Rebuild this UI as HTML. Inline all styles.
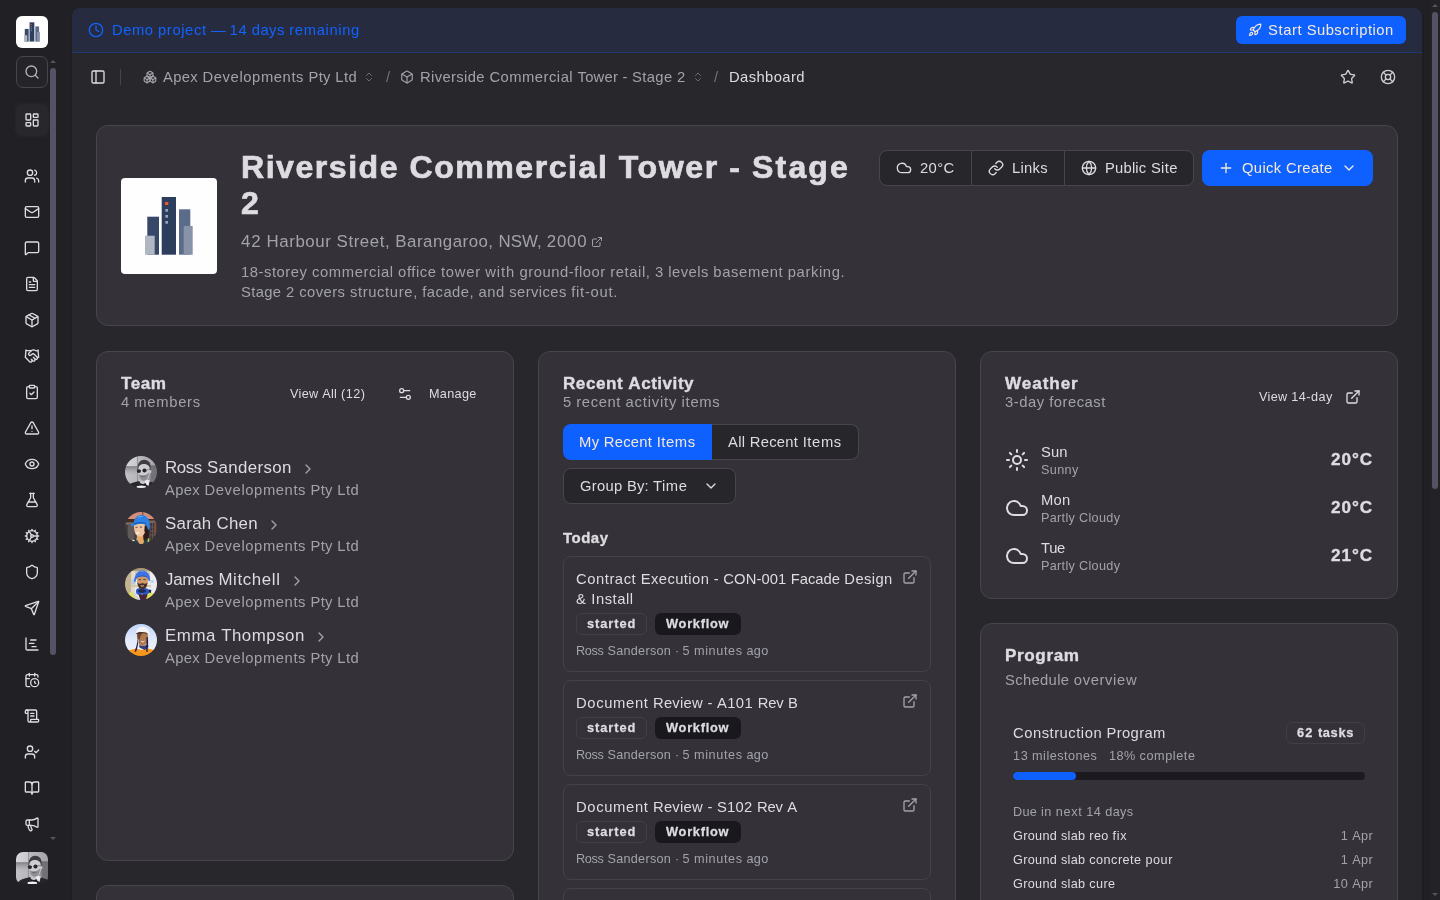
<!DOCTYPE html>
<html lang="en"><head><meta charset="utf-8"><title>Dashboard - Riverside Commercial Tower - Stage 2</title>
<style>
*{box-sizing:border-box;margin:0;padding:0}
html,body{width:1440px;height:900px;overflow:hidden}
body{background:#212025;color:#dedce1;font-size:14px;line-height:20px;position:relative}
body{font-family:"Liberation Sans",sans-serif}
.b,.badge{-webkit-text-stroke:.022em currentColor}
.w{display:inline-block;white-space:pre}
.ic{display:block;flex:none}
.a{position:absolute}
.t{position:absolute;white-space:nowrap}
.mu{color:#a3a2ab}
.b{font-weight:700}
.f12{font-size:12px;line-height:16px}
.f14{font-size:14px;line-height:20px}
.f16{font-size:16px;line-height:24px}
/* sidebar */
#sb .it{position:absolute;left:16px;width:32px;height:32px;display:flex;align-items:center;justify-content:center;color:#dedce1}
#logo{left:16px;top:16px;width:32px;height:32px;background:#fff;border-radius:6px}
#srch{left:16px;top:56px;width:32px;height:32px;border:1px solid #48464d;border-radius:7px;background:#252429;display:flex;align-items:center;justify-content:center;color:#b5b4bb}
.thumb{background:#575263;border-radius:3px;width:6px}
.arr{width:0;height:0;border-left:3px solid transparent;border-right:3px solid transparent}
/* main */
#main{left:72px;top:8px;width:1350px;height:892px;background:#28272c;border-radius:8px 8px 0 0;overflow:hidden}
#mainsh{left:71px;top:8px;width:1353px;height:892px;background:#1e1d22;border-radius:8px 9px 0 0}
#ban{left:0;top:0;width:1350px;height:45px;background:#272b40;border-bottom:1px solid #1f3a72}
.card{position:absolute;background:#343238;border:1px solid #48464d;border-radius:12px}
.btn{position:absolute;display:flex;align-items:center;background:#27262b;border:1px solid #48464d}
.pri{background:#0f61ff;color:#f3e9d6;border:0}
.badge{position:absolute;height:22px;border-radius:6px;font-size:12px;line-height:16px;font-weight:700}
.bo{border:1px solid #413f46}
.bd{background:#19181c;color:#dedce1}
.item{position:absolute;left:24px;width:368px;border:1px solid #444249;border-radius:8px}
</style></head>
<body style="will-change:transform">
<svg width="0" height="0" style="position:absolute"><defs>
<filter id="bl" x="-10%" y="-10%" width="120%" height="120%"><feGaussianBlur stdDeviation=".55"/></filter>
<filter id="bl2" x="-10%" y="-10%" width="120%" height="120%"><feGaussianBlur stdDeviation=".4"/></filter>
<clipPath id="cc"><circle cx="16" cy="16" r="16"/></clipPath>
<linearGradient id="r1" x1="0" y1="0" x2="1" y2="0"><stop offset="0" stop-color="#c4c4c9"/><stop offset=".45" stop-color="#b4b4b9"/><stop offset="1" stop-color="#77777c"/></linearGradient>
<linearGradient id="r2" x1="0" y1="0" x2="0" y2="1"><stop offset="0" stop-color="#77777c" stop-opacity=".9"/><stop offset="1" stop-color="#a8a8ad" stop-opacity="0"/></linearGradient>
<linearGradient id="r3" x1="0" y1="0" x2="1" y2="0"><stop offset="0" stop-color="#dadadf"/><stop offset="1" stop-color="#c8c8cd"/></linearGradient>
<linearGradient id="s4" x1="0" y1="0" x2="0" y2="1"><stop offset="0" stop-color="#b9d3fb"/><stop offset=".55" stop-color="#e6ecfa"/><stop offset="1" stop-color="#f2f3f8"/></linearGradient>
<g id="ross" filter="url(#bl)">
 <rect x="-2" y="-2" width="36" height="36" fill="url(#r1)"/>
 <rect x="-2" y="-2" width="14.300" height="12.300" fill="url(#r3)"/>
 <rect x="12.200" y="-2" width="21" height="12.300" fill="#bcbcc1" opacity=".6"/>
 <rect x="-2" y="10.200" width="36" height="9" fill="url(#r2)"/>
 <rect x="12" y="-2" width=".7" height="30" fill="#85858a"/>
 <rect x="25.500" y="9" width="9" height="22" fill="#66666b" opacity=".65"/>
 <path d="M1 34c.500-4.500 3.500-6.800 8.500-7.800l5.500-1.400h7l4.500 1.200c3.500.8 6 1.800 7.500 3.500v4.500z" fill="#28272c"/>
 <path d="M19.800 23.300l5 1.200-1.300 5.500-3.700-2.500z" fill="#e8e8ec"/>
 <path d="M14 24.300l5.800-.5.500 4-4.300 1.700z" fill="#c4c4c9"/>
 <path d="M12.600 14c-.6-5.500 2-10.200 6.600-10.200 4.500 0 7 3.500 6.400 9.200l-.6 2.500h-12z" fill="#3d3d42"/>
 <path d="M13.300 12.300c.2-2.600 2.300-4.300 5.500-4.300s5.700 1.700 6 4.500c.3 3 .1 6.300-.9 8.800-.9 2.300-2.600 3.600-4.800 3.600s-4.200-1.500-5.100-4c-.7-2.200-.9-5.600-.7-8.600z" fill="#cdcdd2"/>
 <path d="M13.600 18c1.300 1 2.900 1.400 5 1.200s3.900-1 5.400-2.700c-.1 4.300-1.800 8.300-5 8.300s-5-3.300-5.400-6.800z" fill="#8e8e93"/>
 <path d="M16 20.200c1.400.6 3 .5 4.300-.2" stroke="#5d5d62" stroke-width=".8" fill="none"/>
 <ellipse cx="25.500" cy="15.600" rx=".9" ry="1.600" fill="#c4c4c9"/>
 <path d="M15 27.200l3.200 1 2.400-1.200.4 2.200-2.900.3-3 .5z" fill="#17171b"/>
 <ellipse cx="16.300" cy="30.900" rx="4.800" ry="1.500" fill="#eeeef2"/>
</g>
<g id="rossg" filter="url(#bl2)">
 <ellipse cx="13.900" cy="15.100" rx="2.100" ry="1.950" fill="#27272c"/><ellipse cx="19.500" cy="14.500" rx="2.100" ry="1.950" fill="#27272c"/>
 <path d="M21.300 13.900l3.700-.5" stroke="#55555a" stroke-width=".6"/>
</g>
<g id="sarah" filter="url(#bl)">
 <rect x="-2" y="-2" width="36" height="36" fill="#4a4342"/>
 <rect x="-2" y="-2" width="36" height="9" fill="#d48f7c"/>
 <rect x="17" y="-2" width="1.300" height="7" fill="#8c5548"/>
 <rect x="-2" y="7" width="36" height="3.200" fill="#4a2a1f"/>
 <rect x="0" y="10.500" width="8" height="2" fill="#77726f"/>
 <rect x="2.500" y="13" width="6.500" height="15" fill="#5f5a58"/>
 <rect x="0" y="13" width="2.500" height="14" fill="#3c3837"/>
 <rect x="22" y="8.500" width="12" height="2.500" fill="#6e6866"/>
 <rect x="23" y="11" width="6" height="17" fill="#3b3536"/>
 <path d="M25 11v17M27.500 11v17M23 15h7M23 19h7M23 23h7" stroke="#6b6361" stroke-width=".7"/>
 <rect x="29.200" y="9" width="1.600" height="18" fill="#8a4a40"/>
 <path d="M19 13c3 0 5.500 2 5.500 6s-1 8-2.500 10h-6z" fill="#2e1d1e"/>
 <path d="M9.500 26c-1 1.500-1.500 3.500-1.500 6h6z" fill="#3a2526"/>
 <path d="M12.500 22h5.500l.5 6 2 4h-10z" fill="#e5a866"/>
 <path d="M7 34l1-4.500 4-1.500 2.500 4zM26 34l-1-5-5-1.500-2 4.500z" fill="#213f4f"/>
 <rect x="22.700" y="26.500" width="1.500" height="4" fill="#b7dc45"/>
 <rect x="7.300" y="27.800" width="2.400" height="1.300" fill="#dfe3ea"/>
 <path d="M9 13.500c0-2 2.500-3 6-3s5.800 1.500 5.800 4.500c0 2.800-.5 5.500-1.800 7.300s-2.800 2.500-4.500 2.500-3.300-1.200-4.300-3.200c-.9-2-1.200-5.500-1.200-8.100z" fill="#eec6a5"/>
 <path d="M10.800 20.300c1.300.5 2.700.4 3.900-.2-.4 1.300-1.200 1.900-2.100 1.900s-1.500-.7-1.800-1.700z" fill="#fbfbfb"/>
 <path d="M10.500 15.300h2M14.800 15.100h2.200" stroke="#3a2a28" stroke-width=".8"/>
 <path d="M19.800 13l1.300 1.500c.8 2 .5 4-.3 6l-1.500-1z" fill="#2a1a1b"/>
 <path d="M5.800 12.500c.4-1 1.500-1.400 2.800-1.600.6-4.800 3.600-8 7.800-8 4.500 0 7.600 3.200 8.200 8.200.3 2.500.2 5-.5 7.200-.9-.5-1.600-1.500-2-3-.5-2-1.800-2.900-4.200-3.200-3.600-.5-7 .1-9.400 1.700-1.300.8-2.400.5-2.700-1.300z" fill="#2d82e6"/>
 <path d="M9 11.300c2.500-1.200 5.800-1.600 8.800-1.200 2.300.3 3.700 1.300 4.300 3.100-1-1.200-2.500-1.700-4.400-1.900-3.300-.4-6.300.1-8.700 1.600z" fill="#1b5fbe"/>
 <path d="M12.500 5.500c1.500-1.300 4-1.700 6-.8-2-.2-4.200.1-6 .8z" fill="#8cc6fa"/>
</g>
<g id="james" filter="url(#bl)">
 <rect x="-2" y="-2" width="36" height="36" fill="#ecebf0"/>
 <rect x="-2" y="-2" width="8.500" height="36" fill="#c4b591"/>
 <rect x="6.500" y="-2" width="3.500" height="36" fill="#e3dccb"/>
 <rect x="-2" y="-2" width="36" height="5" fill="#9a865e" opacity=".8"/>
 <rect x="10" y="3" width="15" height="6" fill="#cfc6b2"/>
 <rect x="6.500" y="11.500" width="4" height="5" fill="#b4c8e0"/>
 <rect x="6" y="17" width="20" height="2.200" fill="#d4c9ae"/>
 <rect x="25" y="12" width="4" height="3" fill="#c9d6ea"/>
 <path d="M-1 34l1-5 5.500-5 3.500 1 7.500 9zM33 34l-1.500-6-5.500-4-4 1-4 9z" fill="#e0e062"/>
 <path d="M7.500 25l2-1 6 8-2.500 2z" fill="#d9d4d6"/>
 <path d="M13 25l4 1.500 4.500-1.500 1 2-2.500 7h-4z" fill="#46283a"/>
 <path d="M11 22.800c0-1.800 2.500-3 6-3s7 1 7.500 3c.4 1.800-1.300 3.800-3.200 3.800-1.400 0-2.400-.8-4.300-.8s-2.800 1.100-4.200.8-1.800-2-1.800-3.800z" fill="#2a55cf"/>
 <path d="M13 22.900c0-1 1.700-1.700 4-1.700s4 .7 4 1.700-1.700 1.900-4 1.900-4-.9-4-1.900z" fill="#232a4d"/>
 <path d="M24 21.500l2.300.5-.5 3-2-.5z" fill="#1d2340"/>
 <path d="M12 10c0-2 2.300-3 5.500-3s5.500 1 5.500 3.500c0 3-.5 5.500-1.500 7.500s-2.500 3-4.200 3-3.200-1-4.200-3-1.100-5-1.100-8z" fill="#cf9a68"/>
 <path d="M12.300 14.500c1 1 2 1.300 3.200 1.200l2-.7 2 .7c1.200.1 2.200-.3 3-1.200-.2 3.500-1.800 6.700-5 6.700s-4.800-3-5.200-6.700z" fill="#4a2f22"/>
 <path d="M15.300 17.200c1.200.6 2.700.6 3.900 0-.5 1-1.200 1.400-2 1.400s-1.500-.5-1.900-1.400z" fill="#f1e9e2"/>
 <path d="M13.800 11.600h2.200M18.300 11.500h2.400" stroke="#3b2518" stroke-width=".8"/>
 <path d="M9.300 13.800c-.3-2 0-4 .9-5.800 1.300-3.300 3.700-5.500 6.800-5.600 3.500-.1 6.300 2 7.500 5.500.6 1.800.7 3.500.4 5-.5.300-1 .2-1.500-.3-.3-2.200-1.500-3.400-3.300-3.900-2.300-.6-4.800-.4-6.800.6-1.600.8-2.400 2.300-2.800 4.400-.5.500-.9.500-1.200.1z" fill="#3c72e6"/>
 <path d="M11 9.500c1.500-1.300 3.700-2 6-2 2.500 0 4.700.8 6 2.300-1.600-.9-3.700-1.300-6-1.300s-4.400.3-6 1z" fill="#2a55c2"/>
 <path d="M14.800 3.800c1.500-.8 3.500-.8 5 0-1.500-.2-3.500-.2-5 0z" fill="#9cc4fb"/>
</g>
<g id="emma" filter="url(#bl)">
 <rect x="-2" y="-2" width="36" height="36" fill="url(#s4)"/>
 <path d="M-2 34v-4.500l6-3.300 7-1.700 5.500 1.500 6.500-1.500 5 1.200 6 2.300v6z" fill="#f7981d"/>
 <path d="M14 21l4.500 1 4.500-1.500.5 2.500-4 3-5-2.500z" fill="#363a7e"/>
 <path d="M12.300 9.500c0-1.500 2.300-2.300 5.200-2.300s5.200 1.300 5.400 3.800c.2 3-.2 6-1.200 8-1 2-2.500 3-4.200 3s-3.300-1-4.200-3-1-6-1-9.500z" fill="#b07a4f"/>
 <path d="M12.200 9.500c.3-1.400 2.300-2.300 5.300-2.300l-1 3.300c-1.500 2.500-2.300 5.500-2.200 9-1.500-2-2.100-6-2.100-10z" fill="#6e4530"/>
 <path d="M16 16.800c1.300.6 2.800.5 4-.2-.5 1.200-1.300 1.800-2.200 1.800s-1.500-.6-1.800-1.600z" fill="#e7d7cc"/>
 <path d="M12.600 16c-.5 3-1 6-2.300 9.500l-.8 2 1.500.3 1-2.500c.8-3 1.200-6 1.300-9z" fill="#241f45"/>
 <path d="M22.600 13c.7 3 .7 7 .2 10.500l-.2 4.500-1.300-.2-.2-4.500c.5-3.500.6-7 .3-10z" fill="#241f45"/>
 <path d="M13.600 15.500c-.3 2-.3 4 .2 6" stroke="#c9d3ee" stroke-width=".8" fill="none"/>
 <path d="M10.800 9c.5-3.700 3-6.300 6.700-6.300 3.800 0 6.500 2.500 7 6.500.2 1.300.1 2.300-.1 3-.7-.5-1-1.200-1.300-2-.5-1.400-2.500-2-5.500-2.100-2.500-.1-4.800.2-6.300 1-.3.200-.5.100-.5-.1z" fill="#f3f3f6"/>
 <path d="M11 9.500c1.700-.9 4-1.300 6.500-1.200 3 .1 5 .8 5.700 2.200-1.300-.8-3.300-1.100-5.700-1.200-2.500-.1-4.800.3-6.500 1z" fill="#3a2a2e"/>
</g>
</defs></svg>
<!-- ============ SIDEBAR ============ -->
<div id="sb">
  <div class="a" id="logo">
    <svg width="32" height="32" viewBox="0 0 96 96" style="display:block">
      <rect x="26.3" y="38.7" width="11.7" height="38" fill="#364768"/>
      <rect x="24" y="57.7" width="9.7" height="19" fill="#b0b7c3"/>
      <rect x="58" y="31.3" width="11.3" height="45.4" fill="#5b6b8a"/>
      <rect x="62.7" y="48" width="9" height="28.7" fill="#8793a9"/>
      <rect x="40.7" y="19" width="14.3" height="57.7" fill="#2d3e5c"/>
      <rect x="44" y="24" width="3.3" height="3" fill="#f0553a"/>
      <rect x="44.3" y="31" width="2.7" height="2.7" fill="#97a3b8"/><rect x="44.3" y="37" width="2.7" height="2.7" fill="#97a3b8"/><rect x="44.3" y="43" width="2.7" height="2.7" fill="#97a3b8"/>
    </svg>
  </div>
  <div class="a" id="srch"><svg class="ic" width="16" height="16" viewBox="0 0 24 24" fill="none" stroke="currentColor" stroke-width="2" stroke-linecap="round" stroke-linejoin="round"><path d="m21 21-4.34-4.34"/><circle cx="11" cy="11" r="8"/></svg></div>
  <div class="a" style="left:16px;top:104px;width:32px;height:32px;border-radius:7px;background:#28272c;box-shadow:0 0 3px 1px #28272c"></div>
  <div class="it" style="top:104px"><svg class="ic" width="16" height="16" viewBox="0 0 24 24" fill="none" stroke="currentColor" stroke-width="2" stroke-linecap="round" stroke-linejoin="round"><rect width="7" height="9" x="3" y="3" rx="1"/><rect width="7" height="5" x="14" y="3" rx="1"/><rect width="7" height="9" x="14" y="12" rx="1"/><rect width="7" height="5" x="3" y="16" rx="1"/></svg></div>
  <div class="it" style="top:160px"><svg class="ic" width="16" height="16" viewBox="0 0 24 24" fill="none" stroke="currentColor" stroke-width="2" stroke-linecap="round" stroke-linejoin="round"><path d="M16 21v-2a4 4 0 0 0-4-4H6a4 4 0 0 0-4 4v2"/><path d="M16 3.128a4 4 0 0 1 0 7.744"/><path d="M22 21v-2a4 4 0 0 0-3-3.87"/><circle cx="9" cy="7" r="4"/></svg></div>
  <div class="it" style="top:196px"><svg class="ic" width="16" height="16" viewBox="0 0 24 24" fill="none" stroke="currentColor" stroke-width="2" stroke-linecap="round" stroke-linejoin="round"><path d="m22 7-8.991 5.727a2 2 0 0 1-2.009 0L2 7"/><rect x="2" y="4" width="20" height="16" rx="2"/></svg></div>
  <div class="it" style="top:232px"><svg class="ic" width="16" height="16" viewBox="0 0 24 24" fill="none" stroke="currentColor" stroke-width="2" stroke-linecap="round" stroke-linejoin="round"><path d="M22 17a2 2 0 0 1-2 2H6.828a2 2 0 0 0-1.414.586l-2.202 2.202A.71.71 0 0 1 2 21.286V5a2 2 0 0 1 2-2h16a2 2 0 0 1 2 2z"/></svg></div>
  <div class="it" style="top:268px"><svg class="ic" width="16" height="16" viewBox="0 0 24 24" fill="none" stroke="currentColor" stroke-width="2" stroke-linecap="round" stroke-linejoin="round"><path d="M6 22a2 2 0 0 1-2-2V4a2 2 0 0 1 2-2h8a2.4 2.4 0 0 1 1.704.706l3.588 3.588A2.4 2.4 0 0 1 20 8v12a2 2 0 0 1-2 2z"/><path d="M14 2v5a1 1 0 0 0 1 1h5"/><path d="M10 9H8"/><path d="M16 13H8"/><path d="M16 17H8"/></svg></div>
  <div class="it" style="top:304px"><svg class="ic" width="16" height="16" viewBox="0 0 24 24" fill="none" stroke="currentColor" stroke-width="2" stroke-linecap="round" stroke-linejoin="round"><path d="M11 21.73a2 2 0 0 0 2 0l7-4A2 2 0 0 0 21 16V8a2 2 0 0 0-1-1.73l-7-4a2 2 0 0 0-2 0l-7 4A2 2 0 0 0 3 8v8a2 2 0 0 0 1 1.73z"/><path d="M12 22V12"/><polyline points="3.29 7 12 12 20.71 7"/><path d="m7.5 4.27 9 5.15"/></svg></div>
  <div class="it" style="top:340px"><svg class="ic" width="16" height="16" viewBox="0 0 24 24" fill="none" stroke="currentColor" stroke-width="2" stroke-linecap="round" stroke-linejoin="round"><path d="m11 17 2 2a1 1 0 1 0 3-3"/><path d="m14 14 2.5 2.5a1 1 0 1 0 3-3l-3.88-3.88a3 3 0 0 0-4.24 0l-.88.88a1 1 0 1 1-3-3l2.81-2.81a5.79 5.79 0 0 1 7.06-.87l.47.28a2 2 0 0 0 1.42.25L21 4"/><path d="m21 3 1 11h-2"/><path d="M3 3 2 14l6.5 6.5a1 1 0 1 0 3-3"/><path d="M3 4h8"/></svg></div>
  <div class="it" style="top:376px"><svg class="ic" width="16" height="16" viewBox="0 0 24 24" fill="none" stroke="currentColor" stroke-width="2" stroke-linecap="round" stroke-linejoin="round"><rect width="8" height="4" x="8" y="2" rx="1" ry="1"/><path d="M16 4h2a2 2 0 0 1 2 2v14a2 2 0 0 1-2 2H6a2 2 0 0 1-2-2V6a2 2 0 0 1 2-2h2"/><path d="m9 14 2 2 4-4"/></svg></div>
  <div class="it" style="top:412px"><svg class="ic" width="16" height="16" viewBox="0 0 24 24" fill="none" stroke="currentColor" stroke-width="2" stroke-linecap="round" stroke-linejoin="round"><path d="m21.73 18-8-14a2 2 0 0 0-3.48 0l-8 14A2 2 0 0 0 4 21h16a2 2 0 0 0 1.73-3"/><path d="M12 9v4"/><path d="M12 17h.01"/></svg></div>
  <div class="it" style="top:448px"><svg class="ic" width="16" height="16" viewBox="0 0 24 24" fill="none" stroke="currentColor" stroke-width="2" stroke-linecap="round" stroke-linejoin="round"><path d="M2.062 12.348a1 1 0 0 1 0-.696 10.75 10.75 0 0 1 19.876 0 1 1 0 0 1 0 .696 10.75 10.75 0 0 1-19.876 0"/><circle cx="12" cy="12" r="3"/></svg></div>
  <div class="it" style="top:484px"><svg class="ic" width="16" height="16" viewBox="0 0 24 24" fill="none" stroke="currentColor" stroke-width="2" stroke-linecap="round" stroke-linejoin="round"><path d="M14 2v6a2 2 0 0 0 .245.96l5.51 10.08A2 2 0 0 1 18 22H6a2 2 0 0 1-1.755-2.96l5.51-10.08A2 2 0 0 0 10 8V2"/><path d="M6.453 15h11.094"/><path d="M8.5 2h7"/></svg></div>
  <div class="it" style="top:520px"><svg class="ic" width="16" height="16" viewBox="0 0 24 24" fill="none" stroke="currentColor" stroke-width="2" stroke-linecap="round" stroke-linejoin="round"><path d="M11 10.27 7 3.34"/><path d="m11 13.73-4 6.93"/><path d="M12 22v-2"/><path d="M12 2v2"/><path d="M14 12h8"/><path d="m17 20.66-1-1.73"/><path d="m17 3.34-1 1.73"/><path d="M2 12h2"/><path d="m20.66 17-1.73-1"/><path d="m20.66 7-1.73 1"/><path d="m3.34 17 1.73-1"/><path d="m3.34 7 1.73 1"/><circle cx="12" cy="12" r="2"/><circle cx="12" cy="12" r="8"/></svg></div>
  <div class="it" style="top:556px"><svg class="ic" width="16" height="16" viewBox="0 0 24 24" fill="none" stroke="currentColor" stroke-width="2" stroke-linecap="round" stroke-linejoin="round"><path d="M20 13c0 5-3.5 7.5-7.66 8.95a1 1 0 0 1-.67-.01C7.5 20.5 4 18 4 13V6a1 1 0 0 1 1-1c2 0 4.5-1.2 6.24-2.72a1.17 1.17 0 0 1 1.52 0C14.51 3.81 17 5 19 5a1 1 0 0 1 1 1z"/></svg></div>
  <div class="it" style="top:592px"><svg class="ic" width="16" height="16" viewBox="0 0 24 24" fill="none" stroke="currentColor" stroke-width="2" stroke-linecap="round" stroke-linejoin="round"><path d="M14.536 21.686a.5.5 0 0 0 .937-.024l6.5-19a.496.496 0 0 0-.635-.635l-19 6.5a.5.5 0 0 0-.024.937l7.93 3.18a2 2 0 0 1 1.112 1.11z"/><path d="m21.854 2.147-10.94 10.939"/></svg></div>
  <div class="it" style="top:628px"><svg class="ic" width="16" height="16" viewBox="0 0 24 24" fill="none" stroke="currentColor" stroke-width="2" stroke-linecap="round" stroke-linejoin="round"><path d="M10 6h8"/><path d="M12 16h6"/><path d="M3 3v16a2 2 0 0 0 2 2h16"/><path d="M8 11h7"/></svg></div>
  <div class="it" style="top:664px"><svg class="ic" width="16" height="16" viewBox="0 0 24 24" fill="none" stroke="currentColor" stroke-width="2" stroke-linecap="round" stroke-linejoin="round"><path d="M16 14v2.2l1.6 1"/><path d="M16 2v4"/><path d="M21 7.5V6a2 2 0 0 0-2-2H5a2 2 0 0 0-2 2v14a2 2 0 0 0 2 2h3.5"/><path d="M3 10h5"/><path d="M8 2v4"/><circle cx="16" cy="16" r="6"/></svg></div>
  <div class="it" style="top:700px"><svg class="ic" width="16" height="16" viewBox="0 0 24 24" fill="none" stroke="currentColor" stroke-width="2" stroke-linecap="round" stroke-linejoin="round"><path d="M15 12h-5"/><path d="M15 8h-5"/><path d="M19 17V5a2 2 0 0 0-2-2H4"/><path d="M8 21h12a2 2 0 0 0 2-2v-1a1 1 0 0 0-1-1H11a1 1 0 0 0-1 1v1a2 2 0 1 1-4 0V5a2 2 0 1 0-4 0v2a1 1 0 0 0 1 1h3"/></svg></div>
  <div class="it" style="top:736px"><svg class="ic" width="16" height="16" viewBox="0 0 24 24" fill="none" stroke="currentColor" stroke-width="2" stroke-linecap="round" stroke-linejoin="round"><path d="m16 11 2 2 4-4"/><path d="M16 21v-2a4 4 0 0 0-4-4H6a4 4 0 0 0-4 4v2"/><circle cx="9" cy="7" r="4"/></svg></div>
  <div class="it" style="top:772px"><svg class="ic" width="16" height="16" viewBox="0 0 24 24" fill="none" stroke="currentColor" stroke-width="2" stroke-linecap="round" stroke-linejoin="round"><path d="M12 7v14"/><path d="M3 18a1 1 0 0 1-1-1V4a1 1 0 0 1 1-1h5a4 4 0 0 1 4 4 4 4 0 0 1 4-4h5a1 1 0 0 1 1 1v13a1 1 0 0 1-1 1h-6a3 3 0 0 0-3 3 3 3 0 0 0-3-3z"/></svg></div>
  <div class="it" style="top:808px"><svg class="ic" width="16" height="16" viewBox="0 0 24 24" fill="none" stroke="currentColor" stroke-width="2" stroke-linecap="round" stroke-linejoin="round"><path d="M11 6a13 13 0 0 0 8.4-2.8A1 1 0 0 1 21 4v12a1 1 0 0 1-1.6.8A13 13 0 0 0 11 14H5a2 2 0 0 1-2-2V8a2 2 0 0 1 2-2z"/><path d="M6 14a12 12 0 0 0 2.4 7.2 2 2 0 0 0 3.2-2.4A8 8 0 0 1 10 14"/><path d="M8 6v8"/></svg></div>
  <div class="a arr" style="left:50px;top:60px;border-bottom:3px solid #575263"></div>
  <div class="a thumb" style="left:50px;top:68px;height:587px"></div>
  <div class="a arr" style="left:50px;top:837px;border-top:3px solid #575263"></div>
  <!-- user avatar -->
  <div class="a" style="left:16px;top:852px;width:32px;height:32px;border-radius:7px;overflow:hidden"><svg width="32" height="32" viewBox="0 0 32 32" style="display:block"><use href="#ross"/><use href="#rossg"/></svg></div>
</div>

<!-- ============ PAGE SCROLLBAR ============ -->
<div class="a" style="left:1430px;top:0;width:10px;height:900px;background:#232227"></div>
<div class="a arr" style="left:1432px;top:4px;border-bottom:3px solid #575263"></div>
<div class="a thumb" style="left:1432px;top:12px;height:477px"></div>
<div class="a arr" style="left:1432px;top:893px;border-top:3px solid #575263"></div>

<!-- ============ MAIN ============ -->
<div class="a" id="mainsh"></div>
<div class="a" id="main">
  <div class="a" id="ban">
    <div class="a" style="left:16px;top:14px;color:#1163ff"><svg class="ic" width="16" height="16" viewBox="0 0 24 24" fill="none" stroke="currentColor" stroke-width="2" stroke-linecap="round" stroke-linejoin="round"><path d="M12 6v6l4 2"/><circle cx="12" cy="12" r="10"/></svg></div>
    <span class="t f14" style="left:40px;top:12px;color:#1163ff;font-size:14.77px;margin-top:-0.27px"><span class="w" style="width:46.05px;letter-spacing:0.555px">Demo </span><span class="w" style="width:53.03px;letter-spacing:0.609px">project </span><span class="w" style="width:18.45px;letter-spacing:-0.766px">— </span><span class="w" style="width:22.27px;letter-spacing:0.695px">14 </span><span class="w" style="width:37.50px;letter-spacing:0.465px">days </span><span class="w" style="width:70.70px;letter-spacing:0.651px">remaining</span></span>
    <div class="btn pri" style="left:1164px;top:8px;width:170px;height:28px;border-radius:6px">
      <div class="a" style="left:12px;top:7px"><svg class="ic" width="14" height="14" viewBox="0 0 24 24" fill="none" stroke="currentColor" stroke-width="2" stroke-linecap="round" stroke-linejoin="round"><path d="M4.5 16.5c-1.5 1.26-2 5-2 5s3.74-.5 5-2c.71-.84.7-2.13-.09-2.91a2.18 2.18 0 0 0-2.91-.09z"/><path d="m12 15-3-3a22 22 0 0 1 2-3.95A12.88 12.88 0 0 1 22 2c0 2.72-.78 7.5-6 11a22.35 22.35 0 0 1-4 2z"/><path d="M9 12H4s.55-3.03 2-4c1.62-1.08 5 0 5 0"/><path d="M12 15v5s3.03-.55 4-2c1.08-1.62 0-5 0-5"/></svg></div>
      <span class="t f14" style="left:32px;top:4px;font-size:14.77px;margin-top:-0.27px"><span class="w" style="width:38.64px;letter-spacing:0.603px">Start </span><span class="w" style="width:87.00px;letter-spacing:0.478px">Subscription</span></span>
    </div>
  </div>
  <!-- header row -->
  <div class="a" style="left:18px;top:61px;color:#dedce1"><svg class="ic" width="16" height="16" viewBox="0 0 24 24" fill="none" stroke="currentColor" stroke-width="2" stroke-linecap="round" stroke-linejoin="round"><rect width="18" height="18" x="3" y="3" rx="2"/><path d="M9 3v18"/></svg></div>
  <div class="a" style="left:48px;top:61px;width:1px;height:16px;background:#46444b"></div>
  <div class="a mu" style="left:71px;top:62px"><svg class="ic" width="14" height="14" viewBox="0 0 24 24" fill="none" stroke="currentColor" stroke-width="2" stroke-linecap="round" stroke-linejoin="round"><path d="M2.97 12.92A2 2 0 0 0 2 14.63v3.24a2 2 0 0 0 .97 1.71l3 1.8a2 2 0 0 0 2.06 0L12 19v-5.5l-5-3-4.03 2.42Z"/><path d="m7 16.5-4.74-2.85"/><path d="m7 16.5 5-3"/><path d="M7 16.5v5.17"/><path d="M12 13.5V19l3.97 2.38a2 2 0 0 0 2.06 0l3-1.8a2 2 0 0 0 .97-1.71v-3.24a2 2 0 0 0-.97-1.71L17 10.5l-5 3Z"/><path d="m17 16.5-5-3"/><path d="m17 16.5 4.74-2.85"/><path d="M17 16.5v5.17"/><path d="M7.97 4.42A2 2 0 0 0 7 6.13v4.37l5 3 5-3V6.13a2 2 0 0 0-.97-1.71l-3-1.8a2 2 0 0 0-2.06 0l-3 1.8Z"/><path d="M12 8 7.26 5.15"/><path d="m12 8 4.74-2.85"/><path d="M12 13.5V8"/></svg></div>
  <span class="t f14 mu" style="left:91px;top:59px;font-size:14.77px;margin-top:-0.27px"><span class="w" style="width:39.56px;letter-spacing:0.367px">Apex </span><span class="w" style="width:105.98px;letter-spacing:0.595px">Developments </span><span class="w" style="width:26.67px;letter-spacing:0.297px">Pty </span><span class="w" style="width:22.19px;letter-spacing:0.547px">Ltd</span></span>
  <div class="a mu" style="left:291px;top:63px;opacity:.55"><svg class="ic" width="12" height="12" viewBox="0 0 24 24" fill="none" stroke="currentColor" stroke-width="2" stroke-linecap="round" stroke-linejoin="round"><path d="m7 15 5 5 5-5"/><path d="m7 9 5-5 5 5"/></svg></div>
  <span class="t f14" style="left:314px;top:59px;color:#74737c;font-size:14.77px;margin-top:-0.27px"><span class="w" style="width:4.72px;letter-spacing:0.609px">/</span></span>
  <div class="a mu" style="left:328px;top:62px"><svg class="ic" width="14" height="14" viewBox="0 0 24 24" fill="none" stroke="currentColor" stroke-width="2" stroke-linecap="round" stroke-linejoin="round"><path d="M21 8a2 2 0 0 0-1-1.73l-7-4a2 2 0 0 0-2 0l-7 4A2 2 0 0 0 3 8v8a2 2 0 0 0 1 1.73l7 4a2 2 0 0 0 2 0l7-4A2 2 0 0 0 21 16Z"/><path d="m3.3 7 8.7 5 8.7-5"/><path d="M12 22V12"/></svg></div>
  <span class="t f14 mu" style="left:348px;top:59px;font-size:14.77px;margin-top:-0.27px"><span class="w" style="width:69.39px;letter-spacing:0.380px">Riverside </span><span class="w" style="width:88.19px;letter-spacing:0.498px">Commercial </span><span class="w" style="width:45.02px;letter-spacing:0.234px">Tower </span><span class="w" style="width:9.50px;letter-spacing:0.125px">- </span><span class="w" style="width:44.91px;letter-spacing:0.372px">Stage </span><span class="w" style="width:8.92px;letter-spacing:0.703px">2</span></span>
  <div class="a mu" style="left:620px;top:63px;opacity:.55"><svg class="ic" width="12" height="12" viewBox="0 0 24 24" fill="none" stroke="currentColor" stroke-width="2" stroke-linecap="round" stroke-linejoin="round"><path d="m7 15 5 5 5-5"/><path d="m7 9 5-5 5 5"/></svg></div>
  <span class="t f14" style="left:642px;top:59px;color:#74737c;font-size:14.77px;margin-top:-0.27px"><span class="w" style="width:4.72px;letter-spacing:0.609px">/</span></span>
  <span class="t f14" style="left:657px;top:59px;font-size:14.77px;margin-top:-0.27px"><span class="w" style="width:75.97px;letter-spacing:0.413px">Dashboard</span></span>
  <div class="a" style="left:1268px;top:61px;color:#cfced4"><svg class="ic" width="16" height="16" viewBox="0 0 24 24" fill="none" stroke="currentColor" stroke-width="2" stroke-linecap="round" stroke-linejoin="round"><path d="M11.525 2.295a.53.53 0 0 1 .95 0l2.31 4.679a2.123 2.123 0 0 0 1.595 1.16l5.166.756a.53.53 0 0 1 .294.904l-3.736 3.638a2.123 2.123 0 0 0-.611 1.878l.882 5.14a.53.53 0 0 1-.771.56l-4.618-2.428a2.122 2.122 0 0 0-1.973 0L6.396 21.01a.53.53 0 0 1-.77-.56l.881-5.139a2.122 2.122 0 0 0-.611-1.879L2.16 9.795a.53.53 0 0 1 .294-.906l5.165-.755a2.122 2.122 0 0 0 1.597-1.16z"/></svg></div>
  <div class="a" style="left:1308px;top:61px;color:#cfced4"><svg class="ic" width="16" height="16" viewBox="0 0 24 24" fill="none" stroke="currentColor" stroke-width="2" stroke-linecap="round" stroke-linejoin="round"><circle cx="12" cy="12" r="10"/><path d="m4.93 4.93 4.24 4.24"/><path d="m14.83 9.17 4.24-4.24"/><path d="m14.83 14.83 4.24 4.24"/><path d="m9.17 14.83-4.24 4.24"/><circle cx="12" cy="12" r="4"/></svg></div>

  <!-- project header card -->
  <div class="card" style="left:24px;top:117px;width:1302px;height:201px">
    <div class="a" style="left:24px;top:52px;width:96px;height:96px;background:#fefefe;border-radius:4px">
      <svg width="96" height="96" viewBox="0 0 96 96" style="display:block">
        <rect x="26.3" y="38.7" width="11.7" height="38" fill="#364768"/>
        <rect x="24" y="57.7" width="9.7" height="19" fill="#b0b7c3"/>
        <rect x="58" y="31.3" width="11.3" height="45.4" fill="#5b6b8a"/>
        <rect x="62.7" y="48" width="9" height="28.700" fill="#8793a9"/>
        <rect x="40.7" y="19" width="14.3" height="57.7" fill="#2d3e5c"/>
        <rect x="44" y="24" width="3.3" height="3" fill="#f0553a"/>
        <rect x="44.3" y="31" width="2.7" height="2.7" fill="#97a3b8"/><rect x="44.3" y="37" width="2.7" height="2.7" fill="#97a3b8"/><rect x="44.3" y="43" width="2.7" height="2.7" fill="#97a3b8"/>
      </svg>
    </div>
    <span class="t b" style="left:144px;top:24px;font-size:30px;line-height:36px;font-size:32.10px;margin-top:-0.73px"><span class="w" style="width:168.48px;letter-spacing:1.512px">Riverside </span><span class="w" style="width:209.33px;letter-spacing:1.523px">Commercial </span><span class="w" style="width:110.39px;letter-spacing:1.569px">Tower </span><span class="w" style="width:22.89px;letter-spacing:1.750px">- </span><span class="w" style="width:98.03px;letter-spacing:2.131px">Stage</span></span>
    <span class="t b" style="left:144px;top:60px;font-size:30px;line-height:36px;font-size:32.10px;margin-top:-0.73px"><span class="w" style="width:20.88px;letter-spacing:3.031px">2</span></span>
    <span class="t mu" style="left:144px;top:104px;font-size:16px;line-height:24px;font-size:16.88px;margin-top:-0.30px"><span class="w" style="width:25.44px;letter-spacing:0.797px">42 </span><span class="w" style="width:70.17px;letter-spacing:0.594px">Harbour </span><span class="w" style="width:58.78px;letter-spacing:0.574px">Street, </span><span class="w" style="width:103.25px;letter-spacing:0.489px">Barangaroo, </span><span class="w" style="width:48.11px;letter-spacing:-0.020px">NSW, </span><span class="w" style="width:40.73px;letter-spacing:0.805px">2000</span></span>
    <div class="a mu" style="left:494px;top:110px"><svg class="ic" width="12" height="12" viewBox="0 0 24 24" fill="none" stroke="currentColor" stroke-width="2" stroke-linecap="round" stroke-linejoin="round"><path d="M15 3h6v6"/><path d="M10 14 21 3"/><path d="M18 13v6a2 2 0 0 1-2 2H5a2 2 0 0 1-2-2V8a2 2 0 0 1 2-2h6"/></svg></div>
    <span class="t f14 mu" style="left:144px;top:136px;font-size:14.77px;margin-top:-0.27px"><span class="w" style="width:71.00px;letter-spacing:0.556px">18-storey </span><span class="w" style="width:86.11px;letter-spacing:0.617px">commercial </span><span class="w" style="width:42.86px;letter-spacing:0.562px">office </span><span class="w" style="width:44.33px;letter-spacing:0.756px">tower </span><span class="w" style="width:34.16px;letter-spacing:0.859px">with </span><span class="w" style="width:90.73px;letter-spacing:0.555px">ground-floor </span><span class="w" style="width:44.81px;letter-spacing:0.607px">retail, </span><span class="w" style="width:13.36px;letter-spacing:0.703px">3 </span><span class="w" style="width:45.03px;letter-spacing:0.471px">levels </span><span class="w" style="width:74.44px;letter-spacing:0.643px">basement </span><span class="w" style="width:57.44px;letter-spacing:0.611px">parking.</span></span>
    <span class="t f14 mu" style="left:144px;top:156px;font-size:14.77px;margin-top:-0.27px"><span class="w" style="width:44.89px;letter-spacing:0.375px">Stage </span><span class="w" style="width:13.36px;letter-spacing:0.703px">2 </span><span class="w" style="width:50.67px;letter-spacing:0.456px">covers </span><span class="w" style="width:72.42px;letter-spacing:0.645px">structure, </span><span class="w" style="width:56.19px;letter-spacing:0.471px">facade, </span><span class="w" style="width:30.80px;letter-spacing:0.568px">and </span><span class="w" style="width:61.89px;letter-spacing:0.412px">services </span><span class="w" style="width:47.02px;letter-spacing:0.746px">fit-out.</span></span>
    <!-- button group -->
    <div class="btn" style="left:782px;top:24px;width:93px;height:36px;border-radius:8px 0 0 8px">
      <div class="a" style="left:16px;top:9px"><svg class="ic" width="16" height="16" viewBox="0 0 24 24" fill="none" stroke="currentColor" stroke-width="2" stroke-linecap="round" stroke-linejoin="round"><path d="M17.5 19H9a7 7 0 1 1 6.71-9h1.79a4.5 4.5 0 1 1 0 9Z"/></svg></div><span class="t f14" style="left:40px;top:7px;font-size:14.77px;margin-top:-0.27px"><span class="w" style="width:34.59px;letter-spacing:0.398px">20°C</span></span></div>
    <div class="btn" style="left:874px;top:24px;width:94px;height:36px">
      <div class="a" style="left:16px;top:9px"><svg class="ic" width="16" height="16" viewBox="0 0 24 24" fill="none" stroke="currentColor" stroke-width="2" stroke-linecap="round" stroke-linejoin="round"><path d="M10 13a5 5 0 0 0 7.54.54l3-3a5 5 0 0 0-7.07-7.07l-1.72 1.71"/><path d="M14 11a5 5 0 0 0-7.54-.54l-3 3a5 5 0 0 0 7.07 7.07l1.71-1.71"/></svg></div><span class="t f14" style="left:40px;top:7px;font-size:14.77px;margin-top:-0.27px"><span class="w" style="width:35.97px;letter-spacing:0.297px">Links</span></span></div>
    <div class="btn" style="left:967px;top:24px;width:130px;height:36px;border-radius:0 8px 8px 0">
      <div class="a" style="left:16px;top:9px"><svg class="ic" width="16" height="16" viewBox="0 0 24 24" fill="none" stroke="currentColor" stroke-width="2" stroke-linecap="round" stroke-linejoin="round"><circle cx="12" cy="12" r="10"/><path d="M12 2a14.5 14.5 0 0 0 0 20 14.5 14.5 0 0 0 0-20"/><path d="M2 12h20"/></svg></div><span class="t f14" style="left:40px;top:7px;font-size:14.77px;margin-top:-0.27px"><span class="w" style="width:45.88px;letter-spacing:0.203px">Public </span><span class="w" style="width:26.89px;letter-spacing:0.359px">Site</span></span></div>
    <div class="btn pri" style="left:1105px;top:24px;width:171px;height:36px;border-radius:8px">
      <div class="a" style="left:16px;top:10px"><svg class="ic" width="16" height="16" viewBox="0 0 24 24" fill="none" stroke="currentColor" stroke-width="2" stroke-linecap="round" stroke-linejoin="round"><path d="M5 12h14"/><path d="M12 5v14"/></svg></div><span class="t f14" style="left:40px;top:8px;font-size:14.77px;margin-top:-0.27px"><span class="w" style="width:44.03px;letter-spacing:0.369px">Quick </span><span class="w" style="width:46.53px;letter-spacing:0.367px">Create</span></span>
      <div class="a" style="left:139px;top:10px"><svg class="ic" width="16" height="16" viewBox="0 0 24 24" fill="none" stroke="currentColor" stroke-width="2" stroke-linecap="round" stroke-linejoin="round"><path d="m6 9 6 6 6-6"/></svg></div></div>
  </div>

  <!-- TEAM card -->
  <div class="card" style="left:24px;top:343px;width:418px;height:510px">
    <span class="t b" style="left:24px;top:20px;font-size:16px;line-height:24px;font-size:17.12px;margin-top:-0.39px"><span class="w" style="width:45.52px;letter-spacing:0.520px">Team</span></span>
    <span class="t f14 mu" style="left:24px;top:40px;font-size:14.77px;margin-top:-0.27px"><span class="w" style="width:13.34px;letter-spacing:0.703px">4 </span><span class="w" style="width:66.45px;letter-spacing:0.701px">members</span></span>
    <span class="t f12" style="left:193px;top:34px;font-size:12.66px;margin-top:-0.23px"><span class="w" style="width:32.28px;letter-spacing:0.316px">View </span><span class="w" style="width:18.69px;letter-spacing:0.271px">All </span><span class="w" style="width:24.66px;letter-spacing:0.531px">(12)</span></span>
    <div class="a" style="left:300px;top:34px"><svg class="ic" width="16" height="16" viewBox="0 0 24 24" fill="none" stroke="currentColor" stroke-width="2" stroke-linecap="round" stroke-linejoin="round"><path d="M14 17H5"/><path d="M19 7h-9"/><circle cx="17" cy="17" r="3"/><circle cx="7" cy="7" r="3"/></svg></div>
    <span class="t f12" style="left:332px;top:34px;font-size:12.66px;margin-top:-0.23px"><span class="w" style="width:47.67px;letter-spacing:0.320px">Manage</span></span>
    <!-- members -->
    <div class="a av" style="left:28px;top:104px"><svg width="32" height="32" viewBox="0 0 32 32" style="display:block"><g clip-path="url(#cc)"><use href="#ross"/><use href="#rossg"/></g></svg></div>
    <span class="t f16" style="left:68px;top:104px;font-size:16.88px;margin-top:-0.30px"><span class="w" style="width:41.94px;letter-spacing:-0.391px">Ross </span><span class="w" style="width:84.95px;letter-spacing:0.377px">Sanderson</span></span>
    <div class="a mu" style="left:203px;top:108.500px"><svg class="ic" width="16" height="16" viewBox="0 0 24 24" fill="none" stroke="currentColor" stroke-width="2" stroke-linecap="round" stroke-linejoin="round"><path d="m9 18 6-6-6-6"/></svg></div>
    <span class="t f14 mu" style="left:68px;top:128px;font-size:14.77px;margin-top:-0.27px"><span class="w" style="width:39.56px;letter-spacing:0.367px">Apex </span><span class="w" style="width:105.98px;letter-spacing:0.595px">Developments </span><span class="w" style="width:26.67px;letter-spacing:0.297px">Pty </span><span class="w" style="width:22.19px;letter-spacing:0.547px">Ltd</span></span>

    <div class="a av" style="left:28px;top:160px"><svg width="32" height="32" viewBox="0 0 32 32" style="display:block"><g clip-path="url(#cc)"><use href="#sarah"/></g></svg></div>
    <span class="t f16" style="left:68px;top:160px;font-size:16.88px;margin-top:-0.30px"><span class="w" style="width:51.56px;letter-spacing:0.297px">Sarah </span><span class="w" style="width:41.31px;letter-spacing:0.250px">Chen</span></span>
    <div class="a mu" style="left:169px;top:164.500px"><svg class="ic" width="16" height="16" viewBox="0 0 24 24" fill="none" stroke="currentColor" stroke-width="2" stroke-linecap="round" stroke-linejoin="round"><path d="m9 18 6-6-6-6"/></svg></div>
    <span class="t f14 mu" style="left:68px;top:184px;font-size:14.77px;margin-top:-0.27px"><span class="w" style="width:39.56px;letter-spacing:0.367px">Apex </span><span class="w" style="width:105.98px;letter-spacing:0.595px">Developments </span><span class="w" style="width:26.67px;letter-spacing:0.297px">Pty </span><span class="w" style="width:22.19px;letter-spacing:0.547px">Ltd</span></span>

    <div class="a av" style="left:28px;top:216px"><svg width="32" height="32" viewBox="0 0 32 32" style="display:block"><g clip-path="url(#cc)"><use href="#james"/></g></svg></div>
    <span class="t f16" style="left:68px;top:216px;font-size:16.88px;margin-top:-0.30px"><span class="w" style="width:53.38px;letter-spacing:-0.272px">James </span><span class="w" style="width:62.20px;letter-spacing:0.629px">Mitchell</span></span>
    <div class="a mu" style="left:192px;top:220.500px"><svg class="ic" width="16" height="16" viewBox="0 0 24 24" fill="none" stroke="currentColor" stroke-width="2" stroke-linecap="round" stroke-linejoin="round"><path d="m9 18 6-6-6-6"/></svg></div>
    <span class="t f14 mu" style="left:68px;top:240px;font-size:14.77px;margin-top:-0.27px"><span class="w" style="width:39.56px;letter-spacing:0.367px">Apex </span><span class="w" style="width:105.98px;letter-spacing:0.595px">Developments </span><span class="w" style="width:26.67px;letter-spacing:0.297px">Pty </span><span class="w" style="width:22.19px;letter-spacing:0.547px">Ltd</span></span>

    <div class="a av" style="left:28px;top:272px"><svg width="32" height="32" viewBox="0 0 32 32" style="display:block"><g clip-path="url(#cc)"><use href="#emma"/></g></svg></div>
    <span class="t f16" style="left:68px;top:272px;font-size:16.88px;margin-top:-0.30px"><span class="w" style="width:56.17px;letter-spacing:0.594px">Emma </span><span class="w" style="width:83.72px;letter-spacing:0.506px">Thompson</span></span>
    <div class="a mu" style="left:216px;top:276.500px"><svg class="ic" width="16" height="16" viewBox="0 0 24 24" fill="none" stroke="currentColor" stroke-width="2" stroke-linecap="round" stroke-linejoin="round"><path d="m9 18 6-6-6-6"/></svg></div>
    <span class="t f14 mu" style="left:68px;top:296px;font-size:14.77px;margin-top:-0.27px"><span class="w" style="width:39.56px;letter-spacing:0.367px">Apex </span><span class="w" style="width:105.98px;letter-spacing:0.595px">Developments </span><span class="w" style="width:26.67px;letter-spacing:0.297px">Pty </span><span class="w" style="width:22.19px;letter-spacing:0.547px">Ltd</span></span>
  </div>
  <div class="card" style="left:24px;top:877px;width:418px;height:200px"></div>

  <!-- RECENT ACTIVITY card -->
  <div class="card" style="left:466px;top:343px;width:418px;height:700px">
    <span class="t b" style="left:24px;top:20px;font-size:16px;line-height:24px;font-size:17.12px;margin-top:-0.39px"><span class="w" style="width:65.31px;letter-spacing:0.516px">Recent </span><span class="w" style="width:65.81px;letter-spacing:0.498px">Activity</span></span>
    <span class="t f14 mu" style="left:24px;top:40px;font-size:14.77px;margin-top:-0.27px"><span class="w" style="width:13.34px;letter-spacing:0.703px">5 </span><span class="w" style="width:49.19px;letter-spacing:0.617px">recent </span><span class="w" style="width:56.06px;letter-spacing:0.811px">activity </span><span class="w" style="width:38.94px;letter-spacing:0.728px">items</span></span>
    <div class="btn pri" style="left:24px;top:72px;width:149px;height:36px;border-radius:8px 0 0 8px"><span class="t f14" style="left:16px;top:8px;font-size:14.77px;margin-top:-0.27px"><span class="w" style="width:24.81px;letter-spacing:0.344px">My </span><span class="w" style="width:52.83px;letter-spacing:0.266px">Recent </span><span class="w" style="width:39.17px;letter-spacing:0.609px">Items</span></span></div>
    <div class="btn" style="left:173px;top:72px;width:147px;height:36px;border-radius:0 8px 8px 0;border-left:0"><span class="t f14" style="left:16px;top:7px;font-size:14.77px;margin-top:-0.27px"><span class="w" style="width:21.80px;letter-spacing:0.312px">All </span><span class="w" style="width:52.84px;letter-spacing:0.268px">Recent </span><span class="w" style="width:39.17px;letter-spacing:0.613px">Items</span></span></div>
    <div class="btn" style="left:24px;top:116px;width:173px;height:36px;border-radius:8px"><span class="t f14" style="left:16px;top:7px;font-size:14.77px;margin-top:-0.27px"><span class="w" style="width:47.06px;letter-spacing:0.316px">Group </span><span class="w" style="width:26.05px;letter-spacing:0.083px">By: </span><span class="w" style="width:34.27px;letter-spacing:0.496px">Time</span></span>
      <div class="a" style="left:139px;top:9px"><svg class="ic" width="16" height="16" viewBox="0 0 24 24" fill="none" stroke="currentColor" stroke-width="2" stroke-linecap="round" stroke-linejoin="round"><path d="m6 9 6 6 6-6"/></svg></div></div>
    <span class="t f14 b" style="left:24px;top:176px;font-size:14.98px;margin-top:-0.34px"><span class="w" style="width:45.48px;letter-spacing:0.503px">Today</span></span>

    <div class="item" style="top:204px;height:116px">
      <span class="t f14" style="left:12px;top:12px;font-size:14.77px;margin-top:-0.27px"><span class="w" style="width:64.67px;letter-spacing:0.553px">Contract </span><span class="w" style="width:73.14px;letter-spacing:0.427px">Execution </span><span class="w" style="width:9.52px;letter-spacing:0.141px">- </span><span class="w" style="width:67.48px;letter-spacing:0.094px">CON-001 </span><span class="w" style="width:53.58px;letter-spacing:-0.021px">Facade </span><span class="w" style="width:48.34px;letter-spacing:0.396px">Design</span></span>
      <span class="t f14" style="left:12px;top:32px;font-size:14.77px;margin-top:-0.27px"><span class="w" style="width:15.36px;letter-spacing:1.062px">&amp; </span><span class="w" style="width:42.16px;letter-spacing:0.509px">Install</span></span>
      <div class="a mu" style="left:338px;top:12px"><svg class="ic" width="16" height="16" viewBox="0 0 24 24" fill="none" stroke="currentColor" stroke-width="2" stroke-linecap="round" stroke-linejoin="round"><path d="M15 3h6v6"/><path d="M10 14 21 3"/><path d="M18 13v6a2 2 0 0 1-2 2H5a2 2 0 0 1-2-2V8a2 2 0 0 1 2-2h6"/></svg></div>
      <div class="badge bo" style="left:12px;top:56px;width:71px"><span class="t" style="left:10px;top:2px;font-size:12.84px;margin-top:-0.29px"><span class="w" style="width:49.36px;letter-spacing:0.940px">started</span></span></div>
      <div class="badge bd" style="left:91px;top:56px;width:86px"><span class="t" style="left:11px;top:3px;font-size:12.84px;margin-top:-0.29px"><span class="w" style="width:63.19px;letter-spacing:0.711px">Workflow</span></span></div>
      <span class="t f12 mu" style="left:12px;top:86px;font-size:12.66px;margin-top:-0.23px"><span class="w" style="width:31.45px;letter-spacing:-0.297px">Ross </span><span class="w" style="width:67.52px;letter-spacing:0.276px">Sanderson </span><span class="w" style="width:7.64px;letter-spacing:-0.406px">· </span><span class="w" style="width:11.44px;letter-spacing:0.594px">5 </span><span class="w" style="width:52.39px;letter-spacing:0.609px">minutes </span><span class="w" style="width:22.33px;letter-spacing:0.396px">ago</span></span>
    </div>
    <div class="item" style="top:328px;height:96px">
      <span class="t f14" style="left:12px;top:12px;font-size:14.77px;margin-top:-0.27px"><span class="w" style="width:76.97px;letter-spacing:0.654px">Document </span><span class="w" style="width:54.41px;letter-spacing:0.258px">Review </span><span class="w" style="width:9.50px;letter-spacing:0.125px">- </span><span class="w" style="width:40.75px;letter-spacing:0.453px">A101 </span><span class="w" style="width:30.45px;letter-spacing:-0.083px">Rev </span><span class="w" style="width:9.61px;letter-spacing:-0.250px">B</span></span>
      <div class="a mu" style="left:338px;top:12px"><svg class="ic" width="16" height="16" viewBox="0 0 24 24" fill="none" stroke="currentColor" stroke-width="2" stroke-linecap="round" stroke-linejoin="round"><path d="M15 3h6v6"/><path d="M10 14 21 3"/><path d="M18 13v6a2 2 0 0 1-2 2H5a2 2 0 0 1-2-2V8a2 2 0 0 1 2-2h6"/></svg></div>
      <div class="badge bo" style="left:12px;top:36px;width:71px"><span class="t" style="left:10px;top:2px;font-size:12.84px;margin-top:-0.29px"><span class="w" style="width:49.36px;letter-spacing:0.940px">started</span></span></div>
      <div class="badge bd" style="left:91px;top:36px;width:86px"><span class="t" style="left:11px;top:3px;font-size:12.84px;margin-top:-0.29px"><span class="w" style="width:63.19px;letter-spacing:0.711px">Workflow</span></span></div>
      <span class="t f12 mu" style="left:12px;top:66px;font-size:12.66px;margin-top:-0.23px"><span class="w" style="width:31.45px;letter-spacing:-0.297px">Ross </span><span class="w" style="width:67.52px;letter-spacing:0.276px">Sanderson </span><span class="w" style="width:7.64px;letter-spacing:-0.406px">· </span><span class="w" style="width:11.44px;letter-spacing:0.594px">5 </span><span class="w" style="width:52.39px;letter-spacing:0.609px">minutes </span><span class="w" style="width:22.33px;letter-spacing:0.396px">ago</span></span>
    </div>
    <div class="item" style="top:432px;height:96px">
      <span class="t f14" style="left:12px;top:12px;font-size:14.77px;margin-top:-0.27px"><span class="w" style="width:76.97px;letter-spacing:0.654px">Document </span><span class="w" style="width:54.41px;letter-spacing:0.258px">Review </span><span class="w" style="width:9.50px;letter-spacing:0.125px">- </span><span class="w" style="width:40.06px;letter-spacing:0.281px">S102 </span><span class="w" style="width:30.44px;letter-spacing:-0.089px">Rev </span><span class="w" style="width:9.59px;letter-spacing:-0.266px">A</span></span>
      <div class="a mu" style="left:338px;top:12px"><svg class="ic" width="16" height="16" viewBox="0 0 24 24" fill="none" stroke="currentColor" stroke-width="2" stroke-linecap="round" stroke-linejoin="round"><path d="M15 3h6v6"/><path d="M10 14 21 3"/><path d="M18 13v6a2 2 0 0 1-2 2H5a2 2 0 0 1-2-2V8a2 2 0 0 1 2-2h6"/></svg></div>
      <div class="badge bo" style="left:12px;top:36px;width:71px"><span class="t" style="left:10px;top:2px;font-size:12.84px;margin-top:-0.29px"><span class="w" style="width:49.36px;letter-spacing:0.940px">started</span></span></div>
      <div class="badge bd" style="left:91px;top:36px;width:86px"><span class="t" style="left:11px;top:3px;font-size:12.84px;margin-top:-0.29px"><span class="w" style="width:63.19px;letter-spacing:0.711px">Workflow</span></span></div>
      <span class="t f12 mu" style="left:12px;top:66px;font-size:12.66px;margin-top:-0.23px"><span class="w" style="width:31.45px;letter-spacing:-0.297px">Ross </span><span class="w" style="width:67.52px;letter-spacing:0.276px">Sanderson </span><span class="w" style="width:7.64px;letter-spacing:-0.406px">· </span><span class="w" style="width:11.44px;letter-spacing:0.594px">5 </span><span class="w" style="width:52.39px;letter-spacing:0.609px">minutes </span><span class="w" style="width:22.33px;letter-spacing:0.396px">ago</span></span>
    </div>
    <div class="item" style="top:536px;height:96px"></div>
  </div>

  <!-- WEATHER card -->
  <div class="card" style="left:908px;top:343px;width:418px;height:248px">
    <span class="t b" style="left:24px;top:20px;font-size:16px;line-height:24px;font-size:17.12px;margin-top:-0.39px"><span class="w" style="width:73.72px;letter-spacing:0.931px">Weather</span></span>
    <span class="t f14 mu" style="left:24px;top:40px;font-size:14.77px;margin-top:-0.27px"><span class="w" style="width:44.16px;letter-spacing:0.556px">3-day </span><span class="w" style="width:56.62px;letter-spacing:0.512px">forecast</span></span>
    <span class="t f12" style="left:278px;top:37px;font-size:12.66px;margin-top:-0.23px"><span class="w" style="width:32.28px;letter-spacing:0.316px">View </span><span class="w" style="width:41.69px;letter-spacing:0.497px">14-day</span></span>
    <div class="a" style="left:364px;top:37px"><svg class="ic" width="16" height="16" viewBox="0 0 24 24" fill="none" stroke="currentColor" stroke-width="2" stroke-linecap="round" stroke-linejoin="round"><path d="M15 3h6v6"/><path d="M10 14 21 3"/><path d="M18 13v6a2 2 0 0 1-2 2H5a2 2 0 0 1-2-2V8a2 2 0 0 1 2-2h6"/></svg></div>

    <div class="a" style="left:24px;top:96px"><svg class="ic" width="24" height="24" viewBox="0 0 24 24" fill="none" stroke="currentColor" stroke-width="2" stroke-linecap="round" stroke-linejoin="round"><circle cx="12" cy="12" r="4"/><path d="M12 2v2"/><path d="M12 20v2"/><path d="m4.93 4.93 1.41 1.41"/><path d="m17.66 17.66 1.41 1.41"/><path d="M2 12h2"/><path d="M20 12h2"/><path d="m6.34 17.66-1.41 1.41"/><path d="m19.07 4.93-1.41 1.41"/></svg></div>
    <span class="t f14" style="left:60px;top:90px;font-size:14.77px;margin-top:-0.27px"><span class="w" style="width:26.64px;letter-spacing:0.120px">Sun</span></span>
    <span class="t f12 mu" style="left:60px;top:110px;font-size:12.66px;margin-top:-0.23px"><span class="w" style="width:37.55px;letter-spacing:0.331px">Sunny</span></span>
    <span class="t b" style="right:24px;top:96px;font-size:16px;line-height:24px;font-size:17.12px;margin-top:-0.39px"><span class="w" style="width:42.02px;letter-spacing:0.945px">20°C</span></span>

    <div class="a" style="left:24px;top:144px"><svg class="ic" width="24" height="24" viewBox="0 0 24 24" fill="none" stroke="currentColor" stroke-width="2" stroke-linecap="round" stroke-linejoin="round"><path d="M17.5 19H9a7 7 0 1 1 6.71-9h1.79a4.5 4.5 0 1 1 0 9Z"/></svg></div>
    <span class="t f14" style="left:60px;top:138px;font-size:14.77px;margin-top:-0.27px"><span class="w" style="width:29.53px;letter-spacing:0.266px">Mon</span></span>
    <span class="t f12 mu" style="left:60px;top:158px;font-size:12.66px;margin-top:-0.23px"><span class="w" style="width:37.94px;letter-spacing:0.294px">Partly </span><span class="w" style="width:41.39px;letter-spacing:0.331px">Cloudy</span></span>
    <span class="t b" style="right:24px;top:144px;font-size:16px;line-height:24px;font-size:17.12px;margin-top:-0.39px"><span class="w" style="width:42.02px;letter-spacing:0.945px">20°C</span></span>

    <div class="a" style="left:24px;top:192px"><svg class="ic" width="24" height="24" viewBox="0 0 24 24" fill="none" stroke="currentColor" stroke-width="2" stroke-linecap="round" stroke-linejoin="round"><path d="M17.5 19H9a7 7 0 1 1 6.71-9h1.79a4.5 4.5 0 1 1 0 9Z"/></svg></div>
    <span class="t f14" style="left:60px;top:186px;font-size:14.77px;margin-top:-0.27px"><span class="w" style="width:23.92px;letter-spacing:-0.328px">Tue</span></span>
    <span class="t f12 mu" style="left:60px;top:206px;font-size:12.66px;margin-top:-0.23px"><span class="w" style="width:37.94px;letter-spacing:0.294px">Partly </span><span class="w" style="width:41.39px;letter-spacing:0.331px">Cloudy</span></span>
    <span class="t b" style="right:24px;top:192px;font-size:16px;line-height:24px;font-size:17.12px;margin-top:-0.39px"><span class="w" style="width:42.02px;letter-spacing:0.945px">21°C</span></span>
  </div>

  <!-- PROGRAM card -->
  <div class="card" style="left:908px;top:615px;width:418px;height:400px">
    <span class="t b" style="left:24px;top:20px;font-size:16px;line-height:24px;font-size:17.12px;margin-top:-0.39px"><span class="w" style="width:74.62px;letter-spacing:0.609px">Program</span></span>
    <span class="t f14 mu" style="left:24px;top:46px;font-size:14.77px;margin-top:-0.27px"><span class="w" style="width:68.78px;letter-spacing:0.346px">Schedule </span><span class="w" style="width:63.47px;letter-spacing:0.650px">overview</span></span>
    <span class="t f14" style="left:32px;top:99px;font-size:14.77px;margin-top:-0.27px"><span class="w" style="width:93.58px;letter-spacing:0.520px">Construction </span><span class="w" style="width:59.09px;letter-spacing:0.350px">Program</span></span>
    <div class="badge bo" style="left:305px;top:98px;width:79px"><span class="t" style="left:10px;top:2px;font-size:12.84px;margin-top:-0.29px"><span class="w" style="width:20.88px;letter-spacing:1.211px">62 </span><span class="w" style="width:36.11px;letter-spacing:0.656px">tasks</span></span></div>
    <span class="t f12 mu" style="left:32px;top:124px;font-size:12.66px;margin-top:-0.23px"><span class="w" style="width:19.08px;letter-spacing:0.602px">13 </span><span class="w" style="width:65.30px;letter-spacing:0.480px">milestones</span></span>
    <span class="t f12 mu" style="left:128px;top:124px;font-size:12.66px;margin-top:-0.23px"><span class="w" style="width:30.48px;letter-spacing:0.443px">18% </span><span class="w" style="width:56.06px;letter-spacing:0.588px">complete</span></span>
    <div class="a" style="left:32px;top:148px;width:352px;height:8px;border-radius:4px;background:#1b1a1e;overflow:hidden"><div style="width:63px;height:8px;background:#0f61ff;border-radius:4px"></div></div>
    <span class="t f12 mu" style="left:32px;top:180px;font-size:12.66px;margin-top:-0.23px"><span class="w" style="width:28.03px;letter-spacing:0.339px">Due </span><span class="w" style="width:14.77px;letter-spacing:0.539px">in </span><span class="w" style="width:30.39px;letter-spacing:0.664px">next </span><span class="w" style="width:19.08px;letter-spacing:0.594px">14 </span><span class="w" style="width:28.34px;letter-spacing:0.398px">days</span></span>
    <span class="t f12" style="left:32px;top:204px;font-size:12.66px;margin-top:-0.23px"><span class="w" style="width:47.95px;letter-spacing:0.320px">Ground </span><span class="w" style="width:28.36px;letter-spacing:0.332px">slab </span><span class="w" style="width:23.22px;letter-spacing:0.365px">reo </span><span class="w" style="width:14.67px;letter-spacing:0.667px">fix</span></span><span class="t f12 mu" style="right:24px;top:204px;font-size:12.66px;margin-top:-0.23px"><span class="w" style="width:11.44px;letter-spacing:0.594px">1 </span><span class="w" style="width:20.78px;letter-spacing:0.354px">Apr</span></span>
    <span class="t f12" style="left:32px;top:228px;font-size:12.66px;margin-top:-0.23px"><span class="w" style="width:47.95px;letter-spacing:0.320px">Ground </span><span class="w" style="width:28.36px;letter-spacing:0.332px">slab </span><span class="w" style="width:56.11px;letter-spacing:0.467px">concrete </span><span class="w" style="width:27.50px;letter-spacing:0.539px">pour</span></span><span class="t f12 mu" style="right:24px;top:228px;font-size:12.66px;margin-top:-0.23px"><span class="w" style="width:11.44px;letter-spacing:0.594px">1 </span><span class="w" style="width:20.78px;letter-spacing:0.354px">Apr</span></span>
    <span class="t f12" style="left:32px;top:252px;font-size:12.66px;margin-top:-0.23px"><span class="w" style="width:47.95px;letter-spacing:0.320px">Ground </span><span class="w" style="width:28.36px;letter-spacing:0.332px">slab </span><span class="w" style="width:26.28px;letter-spacing:0.410px">cure</span></span><span class="t f12 mu" style="right:24px;top:252px;font-size:12.66px;margin-top:-0.23px"><span class="w" style="width:19.08px;letter-spacing:0.602px">10 </span><span class="w" style="width:20.77px;letter-spacing:0.354px">Apr</span></span>
  </div>
</div>
</body></html>
